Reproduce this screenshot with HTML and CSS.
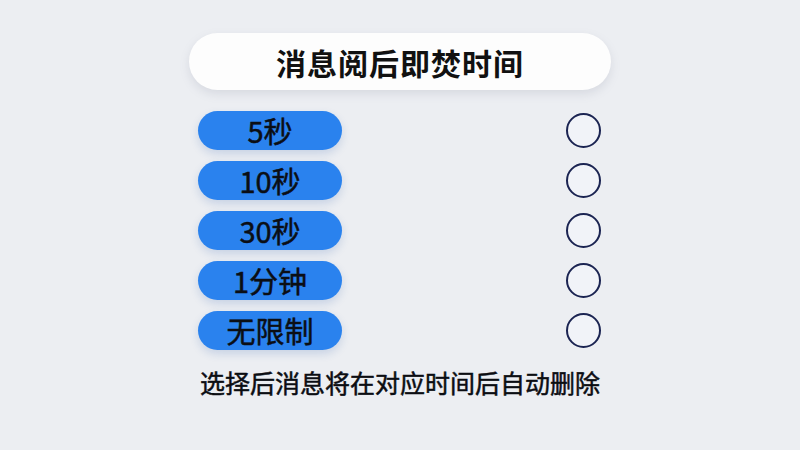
FILE: index.html
```html
<!DOCTYPE html>
<html lang="zh">
<head>
<meta charset="utf-8">
<link rel="stylesheet" href="styles.css">
</head>
<body>
<div class="page">
  <div class="title">消息阅后即焚时间</div>
  <div class="options">
    <div class="row"><div class="pill">5秒</div><div class="radio"></div></div>
    <div class="row"><div class="pill">10秒</div><div class="radio"></div></div>
    <div class="row"><div class="pill">30秒</div><div class="radio"></div></div>
    <div class="row"><div class="pill">1分钟</div><div class="radio"></div></div>
    <div class="row"><div class="pill">无限制</div><div class="radio"></div></div>
  </div>
  <div class="note">选择后消息将在对应时间后自动删除</div>
</div>
</body>
</html>
```
FILE: styles.css
```css
html, body {
  margin: 0;
  padding: 0;
}
body {
  width: 800px;
  height: 450px;
  background: #eceef2;
  font-family: "Noto Sans CJK SC", "Noto Sans", sans-serif;
  color: #111;
  overflow: hidden;
}
.page {
  display: flex;
  flex-direction: column;
  align-items: center;
  padding-top: 33px;
}
.title {
  width: 422px;
  height: 57px;
  border-radius: 29px;
  background: #fdfdfd;
  box-shadow: 0 4px 10px rgba(120, 130, 150, 0.18);
  display: flex;
  align-items: center;
  justify-content: center;
  font-size: 30px;
  font-weight: 700;
  letter-spacing: 1px;
}
.options {
  margin-top: 21px;
  width: 404px;
  display: flex;
  flex-direction: column;
  gap: 11px;
}
.row {
  display: flex;
  align-items: center;
  justify-content: space-between;
  height: 39px;
}
.pill {
  width: 144px;
  height: 39px;
  border-radius: 20px;
  background: #2a82ee;
  box-shadow: 0 4px 8px rgba(40, 90, 170, 0.18);
  display: flex;
  align-items: center;
  justify-content: center;
  font-size: 29px;
  font-weight: 400;
  -webkit-text-stroke: 0.5px #0b0e14;
  color: #0b0e14;
  padding-bottom: 1px;
  box-sizing: border-box;
}
.radio {
  width: 31px;
  height: 31px;
  margin-right: 1px;
  border: 2px solid #1b2452;
  border-radius: 50%;
  background: #f1f3f8;
}
.note {
  margin-top: 14px;
  font-size: 25px;
  font-weight: 400;
  -webkit-text-stroke: 0.5px #0b0d12;
  color: #0b0d12;
}
```
